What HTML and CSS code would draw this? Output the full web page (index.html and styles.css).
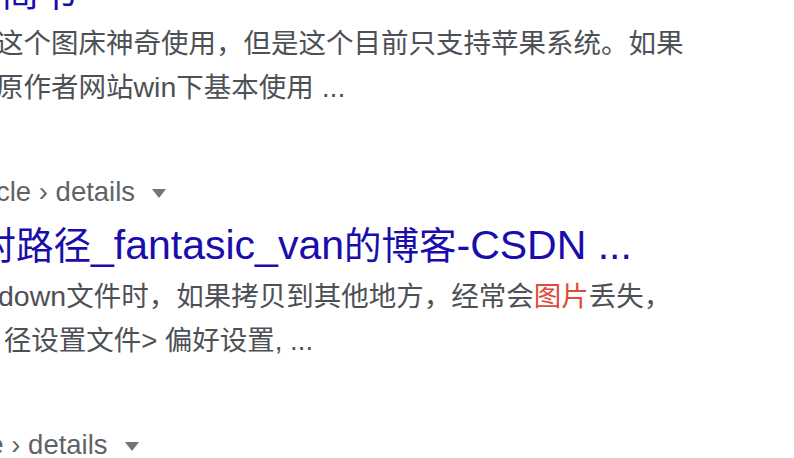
FILE: index.html
```html
<!DOCTYPE html>
<html lang="zh-CN">
<head>
<meta charset="utf-8">
<title>Search results</title>
<link rel="stylesheet" href="styles.css">
</head>
<body>
<div class="results">
  <div class="result">
    <h3 class="title"><a class="title-link">ic - 简书</a></h3>
    <div class="snippet">推荐这个图床神奇使用，但是这个目前只支持苹果系统。如果<br>参考原作者网站<span class="lt">win</span>下基本使用<span class="lt"> ...</span></div>
  </div>
  <div class="result">
    <div class="cite">› article › details<span class="caret"></span></div>
    <h3 class="title"><a class="title-link">相对路径<span class="lt">_fantasic_van</span>的博客<span class="lt">-CSDN ...</span></a></h3>
    <div class="snippet"><span class="lt">slowdown</span>文件时，如果拷贝到其他地方，经常会<em class="hl">图片</em>丢失，<br>的路 径设置文件&gt; 偏好设置, ...</div>
  </div>
  <div class="result">
    <div class="cite">› rule › details<span class="caret"></span></div>
  </div>
</div>
</body>
</html>
```

FILE: styles.css
```css
html, body {
  margin: 0;
  padding: 0;
  background: #ffffff;
}

body {
  width: 794px;
  height: 458px;
  overflow: hidden;
  font-family: "Liberation Sans", Arial, "Noto Sans CJK SC", sans-serif;
}

.results {
  margin-left: -59px;
  margin-top: -31px;
}

.result {
  margin-bottom: 60px;
}

.title {
  margin: 0;
  font-weight: normal;
  font-size: 37.5px;
  line-height: 48px;
  white-space: nowrap;
}

.title .lt {
  font-size: 41px;
  line-height: 40px;
}

.title-link {
  color: #1a0dab;
  text-decoration: none;
}

.snippet {
  margin-top: 4.5px;
  font-size: 27.5px;
  line-height: 44px;
  color: #4d5156;
  white-space: nowrap;
}

.snippet .lt {
  font-size: 28.5px;
  line-height: 36px;
}

.hl {
  font-style: normal;
  color: #dd4b39;
}

.cite {
  font-size: 27.5px;
  line-height: 44px;
  color: #5f6368;
  margin-bottom: 8.5px;
  white-space: nowrap;
}

.caret {
  display: inline-block;
  width: 0;
  height: 0;
  margin-left: 17px;
  border-left: 7px solid transparent;
  border-right: 7px solid transparent;
  border-top: 9px solid #70757a;
  vertical-align: middle;
}
```
